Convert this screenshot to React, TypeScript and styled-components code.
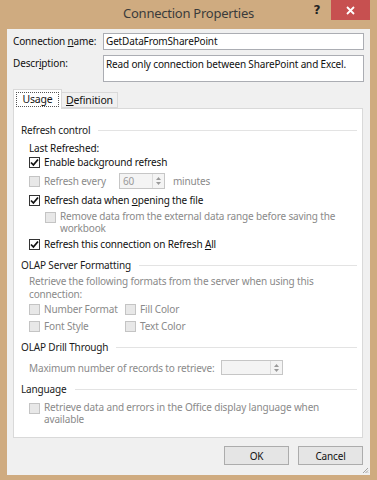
import React from "react";
import styled, { createGlobalStyle } from "styled-components";

const Global = createGlobalStyle`
  html, body { margin: 0; padding: 0; background: #fff; }
  * { box-sizing: border-box; }
  body { font-family: "Noto Sans", "Open Sans", sans-serif; }
`;

const FONT = `"Noto Sans", "Open Sans", sans-serif`;

const Window = styled.div`
  width: 377px;
  height: 480px;
  background: #cfab80;
  display: flex;
  flex-direction: column;
  font-family: ${FONT};
  font-size: 10px;
  letter-spacing: -0.15px;
  color: #111;
`;

const TitleBar = styled.div`
  height: 29px;
  display: grid;
  grid-template-columns: 1fr auto 1fr;
  align-items: start;
`;

const Title = styled.div`
  grid-column: 2;
  padding-top: 4px;
  font-size: 13px;
  letter-spacing: -0.25px;
  color: #3b3b3b;
`;

const Controls = styled.div`
  grid-column: 3;
  justify-self: end;
  display: flex;
  align-items: flex-start;
  margin-right: 7px;
`;

const HelpButton = styled.div`
  width: 20px;
  padding-top: 3px;
  margin-right: 4px;
  font-family: "DejaVu Sans", sans-serif;
  font-weight: bold;
  font-size: 12px;
  color: #222;
  text-align: center;
`;

const CloseButton = styled.div`
  width: 39px;
  height: 20px;
  background: #c75050;
  display: flex;
  align-items: center;
  justify-content: center;
`;

const Body = styled.div`
  position: relative;
  margin: 0 7px 5px 7px;
  height: 446px;
  background: #f0f0f0;
  padding: 4px 6px 0 6px;
  display: flex;
  flex-direction: column;
`;

const FieldGrid = styled.div`
  display: grid;
  grid-template-columns: 90px 1fr;
  row-gap: 5px;
`;

const FieldLabel = styled.div<{ $top?: boolean }>`
  display: flex;
  align-items: ${(p) => (p.$top ? "flex-start" : "center")};
  padding-top: ${(p) => (p.$top ? "2px" : "0")};
  line-height: 13px;
`;

const TextBox = styled.div<{ $h: number }>`
  height: ${(p) => p.$h}px;
  background: #fff;
  border: 1px solid #abadb3;
  padding: ${(p) => (p.$h > 20 ? "2px 2px" : "0 2px")};
  display: flex;
  align-items: ${(p) => (p.$h > 20 ? "flex-start" : "center")};
  line-height: 13px;
`;

const TabStrip = styled.div`
  margin-top: 7px;
  display: flex;
  align-items: flex-end;
  margin-right: 1px;
`;

const Tab = styled.div<{ $active?: boolean; $w: number }>`
  position: relative;
  z-index: ${(p) => (p.$active ? 1 : 0)};
  width: ${(p) => p.$w}px;
  height: ${(p) => (p.$active ? 20 : 16)}px;
  margin-bottom: ${(p) => (p.$active ? -1 : 0)}px;
  background: ${(p) => (p.$active ? "#fff" : "#f0f0f0")};
  border: 1px solid #d9d9d9;
  border-bottom: ${(p) => (p.$active ? "none" : "1px solid #d9d9d9")};
  border-left: ${(p) => (p.$active ? "1px solid #d9d9d9" : "none")};
  display: flex;
  align-items: ${(p) => (p.$active ? "flex-start" : "center")};
  justify-content: center;
  padding-top: ${(p) => (p.$active ? 2 : 0)}px;
  font-size: 10.5px;
`;

const FocusRect = styled.span`
  border: 1px dotted #555;
  padding: 0 5px;
  line-height: 13px;
`;

const Panel = styled.div`
  height: 330px;
  margin-right: 1px;
  background: #fff;
  border: 1px solid #d9d9d9;
  padding: 14px 5px 0 7px;
  display: flex;
  flex-direction: column;
`;

const SectionHeader = styled.div<{ $gap: number }>`
  margin-top: ${(p) => p.$gap}px;
  height: 14px;
  display: flex;
  align-items: center;
  gap: 8px;
  line-height: 14px;
  color: #1a1a1a;
  &::after {
    content: "";
    flex: 1;
    height: 1px;
    background: #e3e3e3;
  }
`;

const Item = styled.div<{ $gap: number; $indent?: number; $disabled?: boolean }>`
  margin-top: ${(p) => p.$gap}px;
  padding-left: ${(p) => 8 + (p.$indent || 0)}px;
  display: flex;
  align-items: flex-start;
  line-height: 14px;
  color: ${(p) => (p.$disabled ? "#8a8a8a" : "#111")};
`;

const Para = styled.div<{ $gap: number }>`
  margin-top: ${(p) => p.$gap}px;
  padding-left: 8px;
  line-height: 13px;
  color: #8a8a8a;
`;

const Row = styled.div<{ $gap: number; $flush?: boolean }>`
  margin-top: ${(p) => p.$gap}px;
  padding-left: ${(p) => (p.$flush ? 0 : 8)}px;
  display: flex;
  align-items: center;
  line-height: 14px;
  color: #8a8a8a;
`;

const CheckGrid = styled.div<{ $gap: number }>`
  margin-top: ${(p) => p.$gap}px;
  padding-left: 8px;
  display: grid;
  grid-template-columns: 96px auto;
  justify-content: start;
  row-gap: 3px;
  color: #8a8a8a;
`;

const BoxWrap = styled.span`
  display: flex;
  height: 14px;
  align-items: center;
  margin-right: 4px;
  flex-shrink: 0;
`;

const Box = styled.span<{ $disabled?: boolean }>`
  width: 11px;
  height: 11px;
  border: 1px solid ${(p) => (p.$disabled ? "#c4c4c4" : "#333")};
  background: ${(p) => (p.$disabled ? "#e8e8e8" : "#fff")};
  display: flex;
  align-items: center;
  justify-content: center;
`;

const Label = styled.span<{ $lh?: number; $ml?: number }>`
  line-height: ${(p) => p.$lh || 14}px;
  margin-left: ${(p) => p.$ml || 0}px;
`;

const Spin = styled.div<{ $w: number; $h: number; $ml: number }>`
  width: ${(p) => p.$w}px;
  height: ${(p) => p.$h}px;
  margin-left: ${(p) => p.$ml}px;
  border: 1px solid #c6c6c6;
  background: #f4f4f4;
  display: flex;
`;

const SpinValue = styled.div`
  flex: 1;
  padding-left: 3px;
  display: flex;
  align-items: center;
  color: #9a9a9a;
`;

const SpinArrows = styled.div`
  width: 12px;
  border-left: 1px solid #dcdcdc;
  display: flex;
  flex-direction: column;
  align-items: center;
  justify-content: center;
  gap: 2px;
`;

const ButtonRow = styled.div`
  margin-top: 8px;
  margin-right: 1px;
  display: flex;
  justify-content: flex-end;
  gap: 9px;
`;

const Button = styled.div`
  width: 65px;
  height: 19px;
  background: #e5e5e5;
  border: 1px solid #acacac;
  display: flex;
  align-items: center;
  justify-content: center;
  color: #111;
`;

const Grip = styled.svg`
  position: absolute;
  right: 1px;
  bottom: 1px;
`;

const U = styled.span`
  text-decoration: underline;
  text-underline-offset: 1px;
`;

const Check = () => (
  <svg width="9" height="9" viewBox="0 0 9 9">
    <path d="M1 4.5 L3.4 7 L8 1.5" fill="none" stroke="#111" strokeWidth="1.8" />
  </svg>
);

const Checkbox = ({ checked, disabled }: { checked?: boolean; disabled?: boolean }) => (
  <BoxWrap>
    <Box $disabled={disabled}>{checked && <Check />}</Box>
  </BoxWrap>
);

const Arrows = () => (
  <SpinArrows>
    <svg width="5" height="3" viewBox="0 0 5 3">
      <path d="M0 3 L2.5 0 L5 3 Z" fill="#9a9a9a" />
    </svg>
    <svg width="5" height="3" viewBox="0 0 5 3">
      <path d="M0 0 L2.5 3 L5 0 Z" fill="#9a9a9a" />
    </svg>
  </SpinArrows>
);

export default function App() {
  return (
    <>
      <Global />
      <Window>
        <TitleBar>
          <Title>Connection Properties</Title>
          <Controls>
            <HelpButton>?</HelpButton>
            <CloseButton>
              <svg width="9" height="9" viewBox="0 0 9 9">
                <path d="M1 1 L8 8 M8 1 L1 8" stroke="#fff" strokeWidth="1.8" />
              </svg>
            </CloseButton>
          </Controls>
        </TitleBar>
        <Body>
          <FieldGrid>
            <FieldLabel>
              <span>
                Connection <U>n</U>ame:
              </span>
            </FieldLabel>
            <TextBox $h={17}>GetDataFromSharePoint</TextBox>
            <FieldLabel $top>
              <span>
                Descr<U>i</U>ption:
              </span>
            </FieldLabel>
            <TextBox $h={27}>Read only connection between SharePoint and Excel.</TextBox>
          </FieldGrid>

          <TabStrip>
            <Tab $active $w={49}>
              <FocusRect>
                Usa<U>g</U>e
              </FocusRect>
            </Tab>
            <Tab $w={56}>
              <span>
                <U>D</U>efinition
              </span>
            </Tab>
          </TabStrip>

          <Panel>
            <SectionHeader $gap={0}>Refresh control</SectionHeader>
            <Item $gap={4}>Last Refreshed:</Item>
            <Item $gap={0}>
              <Checkbox checked />
              <Label>
                Enable back<U>g</U>round refresh
              </Label>
            </Item>
            <Row $gap={4}>
              <Checkbox disabled />
              <Label>Refresh every</Label>
              <Spin $w={46} $h={16} $ml={13}>
                <SpinValue>60</SpinValue>
                <Arrows />
              </Spin>
              <Label $ml={8}>minutes</Label>
            </Row>
            <Item $gap={4}>
              <Checkbox checked />
              <Label>
                Refresh data when <U>o</U>pening the file
              </Label>
            </Item>
            <Item $gap={3} $indent={16} $disabled>
              <Checkbox disabled />
              <Label $lh={12}>Remove data from the external data range before saving the workbook</Label>
            </Item>
            <Item $gap={3}>
              <Checkbox checked />
              <Label>
                Refresh this connection on Refresh <U>A</U>ll
              </Label>
            </Item>

            <SectionHeader $gap={7}>OLAP Server Formatting</SectionHeader>
            <Para $gap={3}>Retrieve the following formats from the server when using this connection:</Para>
            <CheckGrid $gap={1}>
              <Row $gap={0} $flush>
                <Checkbox disabled />
                <Label>Number Format</Label>
              </Row>
              <Row $gap={0} $flush>
                <Checkbox disabled />
                <Label>Fill Color</Label>
              </Row>
              <Row $gap={0} $flush>
                <Checkbox disabled />
                <Label>Font Style</Label>
              </Row>
              <Row $gap={0} $flush>
                <Checkbox disabled />
                <Label>Text Color</Label>
              </Row>
            </CheckGrid>

            <SectionHeader $gap={7}>OLAP Drill Through</SectionHeader>
            <Row $gap={6}>
              <Label>Maximum number of records to retrieve:</Label>
              <Spin $w={62} $h={15} $ml={6}>
                <SpinValue />
                <Arrows />
              </Spin>
            </Row>

            <SectionHeader $gap={7}>Language</SectionHeader>
            <Item $gap={5} $disabled>
              <Checkbox disabled />
              <Label $lh={12}>Retrieve data and errors in the Office display language when available</Label>
            </Item>
          </Panel>

          <ButtonRow>
            <Button>OK</Button>
            <Button>Cancel</Button>
          </ButtonRow>

          <Grip width="7" height="7" viewBox="0 0 7 7">
            <path d="M6 1 L1 6 M6 3.5 L3.5 6 M6 5.5 L5.5 6" stroke="#a0a0a0" strokeWidth="1" />
          </Grip>
        </Body>
      </Window>
    </>
  );
}
